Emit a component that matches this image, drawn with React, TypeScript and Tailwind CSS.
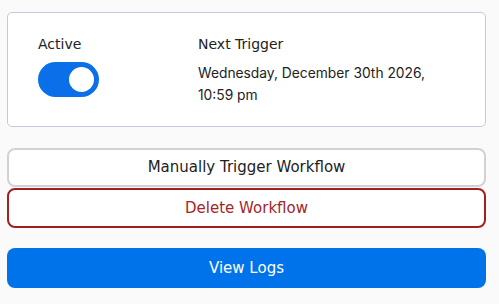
export default function App() {
  return (
    <div className="min-h-[304px] bg-[#fafafa] pt-[12px] pl-[7px]" style={{ fontFamily: '"DejaVu Sans", sans-serif' }}>
      <div className="w-[479px]">
        <div className="flex h-[115px] rounded-[5px] border border-[#c9c6e0] bg-white pt-[21px] pl-[30px]">
          <div className="w-[160px]">
            <div className="text-[14px] leading-[20px] text-[#222]">Active</div>
            <div className="mt-[8px] flex h-[35px] w-[61px] items-center justify-end rounded-full bg-[#0a6fe8] pr-[5px]">
              <div className="h-[25px] w-[25px] rounded-full bg-white" />
            </div>
          </div>
          <div>
            <div className="text-[14px] leading-[20px] text-[#222]">Next Trigger</div>
            <div
              className="mt-[8px] w-[240px] text-[13.8px] leading-[22px] text-[#222]"
              style={{ fontFamily: 'Inter, "Liberation Sans", sans-serif' }}
            >
              Wednesday, December 30th 2026, 10:59 pm
            </div>
          </div>
        </div>
        <div className="mt-[21px] flex flex-col">
          <button className="h-[39px] rounded-[8px] border-2 border-[#d2d2d6] bg-white text-[15px] text-[#222]">
            Manually Trigger Workflow
          </button>
          <button className="mt-[1px] h-[40px] rounded-[8px] border-2 border-[#a11f1f] bg-white text-[15px] text-[#a32626]">
            Delete Workflow
          </button>
          <button className="mt-[20px] h-[40px] rounded-[8px] bg-[#0073ea] text-[15px] text-white">
            View Logs
          </button>
        </div>
      </div>
    </div>
  )
}
